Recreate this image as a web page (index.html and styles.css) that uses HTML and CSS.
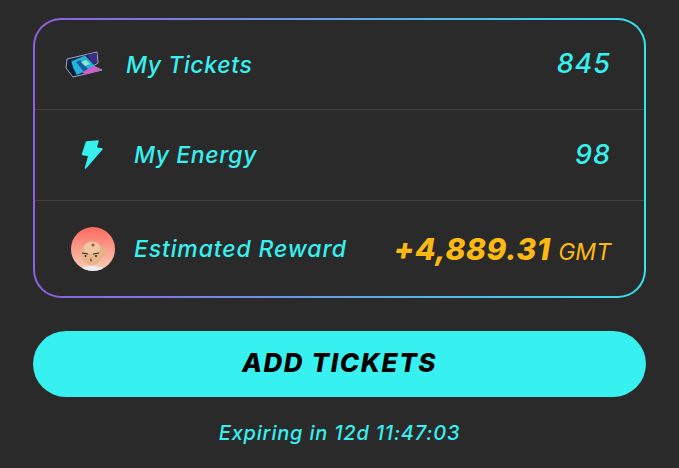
FILE: index.html
```html
<!DOCTYPE html>
<html lang="en">
<head>
    <meta charset="UTF-8">
    <meta name="viewport" content="width=device-width, initial-scale=1.0">
    <title>My Tickets</title>
    <link rel="stylesheet" href="styles.css">
</head>
<body>
    <div class="panel">
        <div class="card">
            <div class="row row-tickets">
                <svg class="icon-ticket" viewBox="0 0 38 28">
                    <path d="M2 8 L32 1 L33 12 L28 15 L37 19 L8 26 L1 17 Z" fill="#142a4c" stroke="#a9a4bf" stroke-width="1"/>
                    <path d="M5 11 L20 4.500 L30 15 L12 24 Z" fill="#22b4dc"/>
                    <path d="M11 11 L15 9 L24 19 L19 21 Z" fill="#1a5f9c"/>
                    <path d="M16 11 L21 9 L25 13 L20 15 Z" fill="#8fe8cc"/>
                    <path d="M17 21.500 L28 15 L36 19 L21 23.500 Z" fill="#d05cd0"/>
                    <path d="M22 3.500 L32 2 L32 11 L28 13 Z" fill="#3b2e88"/>
                    <path d="M3 10 L6 9 L10 24 L8 25 L2 17 Z" fill="#0e2034"/>
                </svg>
                <span class="label">My Tickets</span>
                <span class="value">845</span>
            </div>
            <div class="row row-energy">
                <svg class="icon-bolt" viewBox="0 0 22 30">
                    <path d="M5.500 2 L17 1 L15 8 L21 9 L4.500 28 L8 15.500 L1.500 14.500 Z" fill="#37f0f0" stroke="#37f0f0" stroke-width="1.500" stroke-linejoin="round"/>
                </svg>
                <span class="label">My Energy</span>
                <span class="value">98</span>
            </div>
            <div class="row row-reward">
                <svg class="avatar" viewBox="0 0 44 44">
                    <defs>
                        <linearGradient id="avatarBg" x1="0" y1="0" x2="0" y2="1">
                            <stop offset="0" stop-color="#fb6a60"/>
                            <stop offset="1" stop-color="#fcd0b8"/>
                        </linearGradient>
                        <clipPath id="avatarClip"><circle cx="22" cy="22" r="22"/></clipPath>
                    </defs>
                    <g clip-path="url(#avatarClip)">
                        <rect width="44" height="44" fill="url(#avatarBg)"/>
                        <ellipse cx="21" cy="43" rx="12" ry="4" fill="#e8eef2"/>
                        <path d="M28 24 L37 19 L34 29 L27 32 Z" fill="#e6b08a"/>
                        <ellipse cx="21" cy="26" rx="11" ry="12" fill="#e8b48c"/>
                        <ellipse cx="21" cy="21" rx="8" ry="6" fill="#f2c6a2"/>
                        <circle cx="22" cy="18" r="1.500" fill="#b8483c"/>
                        <path d="M11 26 L17 27 M22 27 L28 26" stroke="#3a2420" stroke-width="1.200"/>
                        <circle cx="14.500" cy="29" r="0.900" fill="#2a1a18"/>
                        <circle cx="25" cy="29" r="0.900" fill="#2a1a18"/>
                        <ellipse cx="20" cy="33" rx="1" ry="1.500" fill="#8f4d3e"/>
                    </g>
                </svg>
                <span class="label label-wide">Estimated Reward</span>
                <span class="reward"><span class="reward-amount">+4,889.31</span> <span class="reward-unit">GMT</span></span>
            </div>
        </div>
        <button class="add-btn">ADD TICKETS</button>
        <p class="expiry">Expiring in 12d 11:47:03</p>
    </div>
</body>
</html>
```

FILE: styles.css
```css
* {
    box-sizing: border-box;
}
body {
    margin: 0;
    height: 468px;
    overflow: hidden;
    background-color: #2a2a2a;
    font-family: "Inter", "Liberation Sans", sans-serif;
    font-style: italic;
}
.panel {
    padding: 18px 33px 0;
}
.card {
    height: 280px;
    border: 2px solid transparent;
    border-radius: 28px;
    background: linear-gradient(#2a2a2a, #2a2a2a) padding-box,
        linear-gradient(90deg, #8f5fe0, #35e3ea) border-box;
}
.row {
    display: flex;
    align-items: center;
    padding-right: 33px;
    color: #37f0f0;
    border-bottom: 1px solid #463f41;
}
.row-tickets {
    height: 90px;
    padding-left: 30px;
}
.row-energy {
    height: 91px;
    padding-left: 46px;
}
.row-reward {
    height: 95px;
    padding-left: 36px;
    border-bottom: none;
}
.icon-ticket {
    width: 38px;
    height: 28px;
    margin-right: 23px;
}
.icon-bolt {
    width: 22px;
    height: 30px;
    margin-right: 31px;
}
.avatar {
    width: 44px;
    height: 44px;
    margin-right: 19px;
}
.label {
    font-size: 23px;
    font-weight: 500;
    letter-spacing: 0.6px;
}
.label-wide {
    letter-spacing: 0.85px;
}
.value {
    margin-left: auto;
    margin-bottom: 2px;
    font-size: 27px;
    font-weight: 500;
    letter-spacing: 1px;
}
.reward {
    margin-left: auto;
    color: #fdb913;
    white-space: nowrap;
}
.reward-amount {
    font-size: 30px;
    font-weight: 800;
    letter-spacing: 0.6px;
}
.reward-unit {
    margin-left: 3px;
    font-size: 23px;
    font-weight: 400;
}
.add-btn {
    display: block;
    width: 100%;
    height: 66px;
    margin-top: 33px;
    padding-bottom: 5px;
    border: none;
    border-radius: 33px;
    background: #37f0f0;
    color: #000;
    font-family: inherit;
    font-style: italic;
    font-size: 26px;
    font-weight: 800;
    letter-spacing: 1.600px;
}
.expiry {
    margin: 24px 0 0;
    text-align: center;
    color: #37f0f0;
    font-size: 20px;
    font-weight: 500;
    line-height: 24px;
    letter-spacing: 0.8px;
}
```
